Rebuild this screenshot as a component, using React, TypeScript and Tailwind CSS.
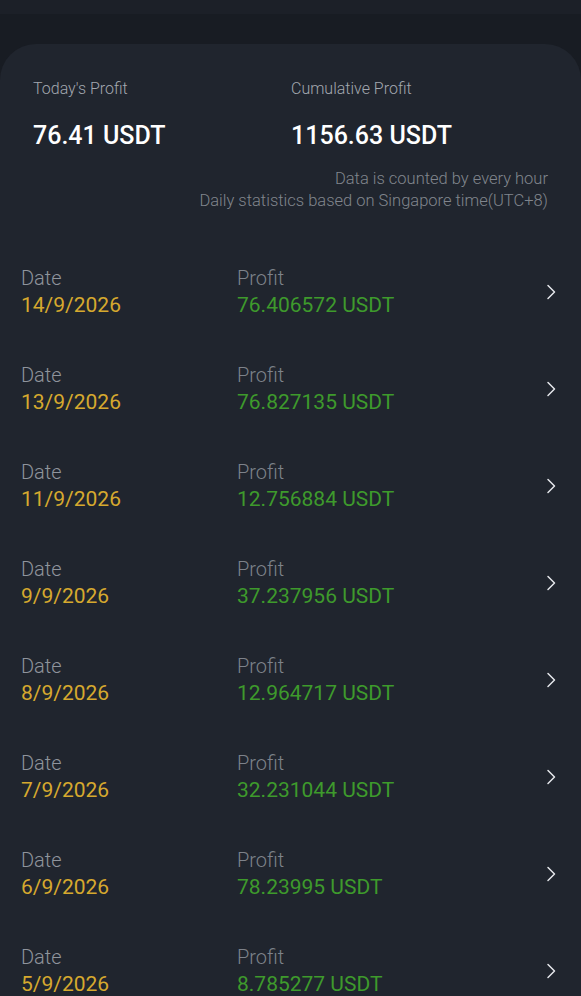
import React from "react";

type Record = { date: string; profit: string };

const records: Record[] = [
  { date: "14/9/2026", profit: "76.406572" },
  { date: "13/9/2026", profit: "76.827135" },
  { date: "11/9/2026", profit: "12.756884" },
  { date: "9/9/2026", profit: "37.237956" },
  { date: "8/9/2026", profit: "12.964717" },
  { date: "7/9/2026", profit: "32.231044" },
  { date: "6/9/2026", profit: "78.23995" },
  { date: "5/9/2026", profit: "8.785277" },
];

const Chevron = () => (
  <svg width="10" height="16" viewBox="0 0 10 16" fill="none">
    <path d="M2 1.5 L8.5 8 L2 14.5" stroke="#e5e7eb" strokeWidth="1.5" strokeLinecap="round" strokeLinejoin="round" />
  </svg>
);

const App: React.FC = () => {
  return (
    <div
      className="w-[581px] h-[996px] overflow-hidden bg-[#181c23]"
      style={{ fontFamily: "Roboto, 'Liberation Sans', sans-serif" }}
    >
      {/* 상단 바 */}
      <div className="h-[14px] bg-[#1c2028]" />
      <div className="h-[30px]" />

      <section className="rounded-t-[36px] bg-[#20252e] min-h-[960px]">
        {/* 수익 요약 */}
        <div className="flex px-[33px] pt-[35px]">
          <div className="w-[258px]">
            <p className="text-[16px] leading-[20px] font-light text-[#a3a8b0]">Today's Profit</p>
            <p className="mt-[22px] text-[25px] leading-[30px] font-medium text-white">76.41 USDT</p>
          </div>
          <div>
            <p className="text-[16px] leading-[20px] font-light text-[#a3a8b0]">Cumulative Profit</p>
            <p className="mt-[22px] text-[25px] leading-[30px] font-medium text-white">1156.63 USDT</p>
          </div>
        </div>

        <div className="mt-[17px] pr-[33px] text-right text-[16.5px] leading-[22px] font-light text-[#80858d]">
          <p>Data is counted by every hour</p>
          <p>Daily statistics based on Singapore time(UTC+8)</p>
        </div>

        {/* 일별 목록 */}
        <ul className="mt-[31px]">
          {records.map((item) => (
            <li key={item.date} className="flex items-center h-[97px] pl-[21px] pr-[25px]">
              <div className="w-[216px]">
                <p className="text-[20px] leading-[26px] font-light text-[#8f949c]">Date</p>
                <p className="text-[21px] leading-[28px] text-[#d6a92e]">{item.date}</p>
              </div>
              <div className="flex-1">
                <p className="text-[20px] leading-[26px] font-light text-[#7d828a]">Profit</p>
                <p className="text-[21px] leading-[28px] text-[#3e9a2c]">{item.profit} USDT</p>
              </div>
              <Chevron />
            </li>
          ))}
        </ul>
      </section>
    </div>
  );
};

export default App;
